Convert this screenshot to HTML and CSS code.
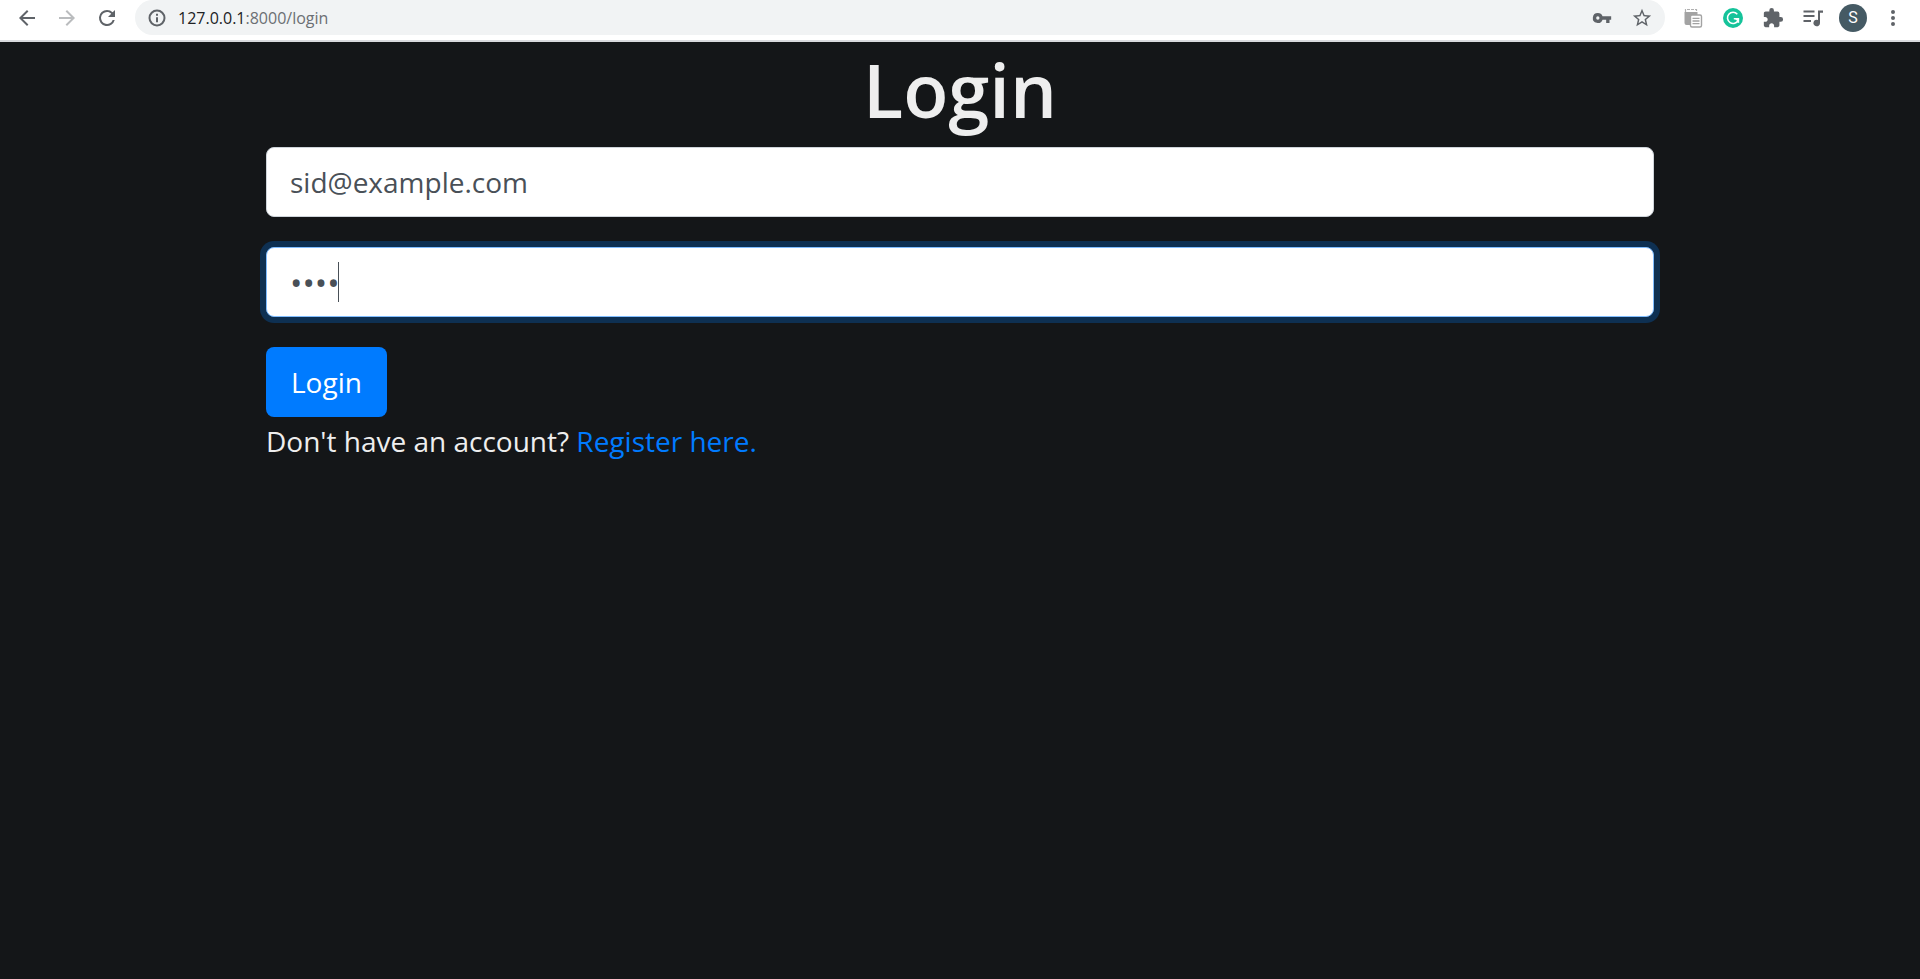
FILE: index.html
```html
<!DOCTYPE html>
<html lang="en">
<head>
<meta charset="utf-8">
<title>Login</title>
<link rel="stylesheet" href="styles.css">
</head>
<body>
<header class="toolbar">
  <button class="tool" aria-label="Back"><svg class="icon" viewBox="0 0 24 24"><path d="M20 11H7.83l5.59-5.59L12 4l-8 8 8 8 1.41-1.41L7.83 13H20v-2z"/></svg></button>
  <button class="tool tool-off" aria-label="Forward"><svg class="icon" viewBox="0 0 24 24"><path d="M12 4l-1.41 1.41L16.17 11H4v2h12.17l-5.58 5.59L12 20l8-8z"/></svg></button>
  <button class="tool" aria-label="Reload"><svg class="icon" viewBox="0 0 24 24"><path d="M17.65 6.35A7.96 7.96 0 0 0 12 4a8 8 0 1 0 7.73 10h-2.08A6 6 0 1 1 12 6c1.66 0 3.14.69 4.22 1.78L13 11h7V4l-2.35 2.35z"/></svg></button>
  <div class="omnibox">
    <svg class="icon icon-info" viewBox="0 0 24 24"><circle cx="12" cy="12" r="9" fill="none" stroke="currentColor" stroke-width="2.4"/><path d="M10.8 11h2.4v6h-2.4zM10.8 7h2.4v2.4h-2.4z"/></svg>
    <span class="url">127.0.0.1<span class="url-rest">:8000/login</span></span>
    <button class="tool" aria-label="Passwords"><svg class="icon icon-key" viewBox="0 0 24 24"><path d="M12.65 10A5.99 5.99 0 0 0 7 6a6 6 0 1 0 5.65 8H17v4h4v-4h2v-4H12.65zM7 14a2 2 0 1 1 0-4 2 2 0 0 1 0 4z"/></svg></button>
    <button class="tool" aria-label="Bookmark"><svg class="icon icon-star" viewBox="0 0 24 24"><path d="M22 9.24l-7.19-.62L12 2 9.19 8.63 2 9.24l5.46 4.73L5.82 21 12 17.27 18.18 21l-1.63-7.03L22 9.24zM12 15.4l-3.76 2.27 1-4.28-3.32-2.88 4.38-.38L12 6.1l1.71 4.04 4.38.38-3.32 2.88 1 4.28L12 15.4z"/></svg></button>
  </div>
  <button class="tool" aria-label="Clipboard extension"><svg class="icon icon-clip" viewBox="0 0 20 20"><path fill="#a3a3a3" d="M1.500 4h13v3H8v10H3.500a2 2 0 0 1-2-2z"/><path fill="none" stroke="#b0b0b0" stroke-width="1.200" stroke-dasharray="3 1" d="M2.500 4V1.500h11V4"/><rect x="7.500" y="7" width="11" height="12" rx="1.500" fill="#fff" stroke="#a3a3a3" stroke-width="1.400"/><path stroke="#a3a3a3" stroke-width="1.300" d="M9.500 10.300h7M9.500 13h7M9.500 15.700h7"/></svg></button>
  <button class="tool" aria-label="Grammar extension"><svg class="icon icon-grammar" viewBox="0 0 20 20"><circle cx="10" cy="10" r="10" fill="#15c39a"/><path fill="none" stroke="#fff" stroke-width="1.600" d="M14.300 6.200A5.600 5.600 0 1 0 15.200 12.200M10.800 10.800h4.600v4"/><path fill="#fff" d="M12 11.200l4-1v4.500l-1.800-2z"/></svg></button>
  <button class="tool" aria-label="Extensions"><svg class="icon icon-puzzle" viewBox="0 0 24 24"><path d="M20.500 11H19V7c0-1.100-.9-2-2-2h-4V3.500a2.500 2.500 0 0 0-5 0V5H4c-1.100 0-1.990.9-1.990 2v3.800H3.500c1.490 0 2.700 1.210 2.700 2.700s-1.210 2.700-2.700 2.700H2V20c0 1.100.9 2 2 2h3.800v-1.500c0-1.490 1.210-2.700 2.700-2.700s2.700 1.210 2.700 2.700V22H17c1.100 0 2-.9 2-2v-4h1.500a2.500 2.500 0 0 0 0-5z"/></svg></button>
  <button class="tool" aria-label="Media queue"><svg class="icon" viewBox="0 0 24 24"><path d="M2.500 4.500h11v2h-11zM2.500 9h11v2h-11zM2.500 14h7.500v2H2.500zM17 4.500h5v2.200h-3V17a3.300 3.300 0 1 1-2-3z"/></svg></button>
  <button class="tool" aria-label="Profile"><span class="avatar">S</span></button>
  <button class="tool" aria-label="Menu"><svg class="icon" viewBox="0 0 24 24"><path d="M12 8a2 2 0 1 0 0-4 2 2 0 0 0 0 4zm0 2a2 2 0 1 0 0 4 2 2 0 0 0 0-4zm0 6a2 2 0 1 0 0 4 2 2 0 0 0 0-4z"/></svg></button>
</header>
<main class="container">
  <h1 class="title">Login</h1>
  <form class="form">
    <input class="control" type="email" aria-label="Email" value="sid@example.com">
    <div class="field">
      <input class="control control-active" type="password" aria-label="Password" value="pass">
      <span class="caret"></span>
    </div>
    <button class="submit" type="button">Login</button>
  </form>
  <p class="note">Don't have an account? <a class="link" href="/register">Register here.</a></p>
</main>
</body>
</html>
```
FILE: styles.css
```css
* { box-sizing: border-box; }

body {
  margin: 0;
  min-height: 100vh;
  background: #141618;
  color: #eee;
  font-family: "Segoe UI", "Open Sans", "Noto Sans", sans-serif;
  font-size: 28px;
}

.toolbar {
  display: flex;
  align-items: flex-start;
  height: 42px;
  padding: 0 7px;
  background: #fff;
  border-bottom: 2px solid #d9dadd;
}

.tool {
  display: flex;
  flex: none;
  align-items: center;
  justify-content: center;
  width: 40px;
  height: 35px;
  padding: 0;
  border: 0;
  background: none;
  color: #5f6368;
}

.tool-off { color: #babcbe; }

.icon {
  display: block;
  flex: none;
  width: 24px;
  height: 24px;
  fill: currentColor;
}

.icon-info, .icon-key, .icon-clip, .icon-grammar { width: 20px; height: 20px; }
.icon-star, .icon-puzzle { width: 22px; height: 22px; }

.omnibox {
  display: flex;
  flex: 1;
  align-items: center;
  height: 35px;
  margin: 0 8px;
  padding: 0 3px 0 12px;
  border-radius: 18px;
  background: #f1f3f4;
  color: #5f6368;
}

.url {
  flex: 1;
  margin-left: 11px;
  color: #202124;
  font-size: 16px;
  line-height: 24px;
}

.url-rest { color: #6b6f73; }

.avatar {
  width: 28px;
  height: 28px;
  border-radius: 50%;
  background: #455a64;
  color: #fff;
  font: 16px/28px Roboto, sans-serif;
  text-align: center;
}

.container {
  max-width: 1448px;
  margin: 0 auto;
  padding: 4px 30px;
}

.title {
  margin: 0 0 13px;
  font-size: 74px;
  font-weight: 600;
  line-height: 88px;
  text-align: center;
}

.form {
  display: flex;
  flex-direction: column;
  align-items: flex-start;
  gap: 30px;
}

.field { position: relative; width: 100%; }

.control {
  display: block;
  width: 100%;
  height: 70px;
  padding: 0 23px;
  border: 1px solid #ced4da;
  border-radius: 8px;
  outline: 0;
  background: #fff;
  color: #495057;
  font: inherit;
}

.control-active {
  border-color: #80bdff;
  box-shadow: 0 0 0 6px #0e3052;
  font-size: 33px;
}

.caret {
  position: absolute;
  top: 15px;
  left: 72px;
  width: 1px;
  height: 40px;
  background: #495057;
}

.submit {
  height: 70px;
  padding: 0 25px;
  border: 0;
  border-radius: 8px;
  background: #007bff;
  color: #fff;
  font: inherit;
}

.note { margin: 0; line-height: 48px; }

.link { color: #007bff; text-decoration: none; }
```
